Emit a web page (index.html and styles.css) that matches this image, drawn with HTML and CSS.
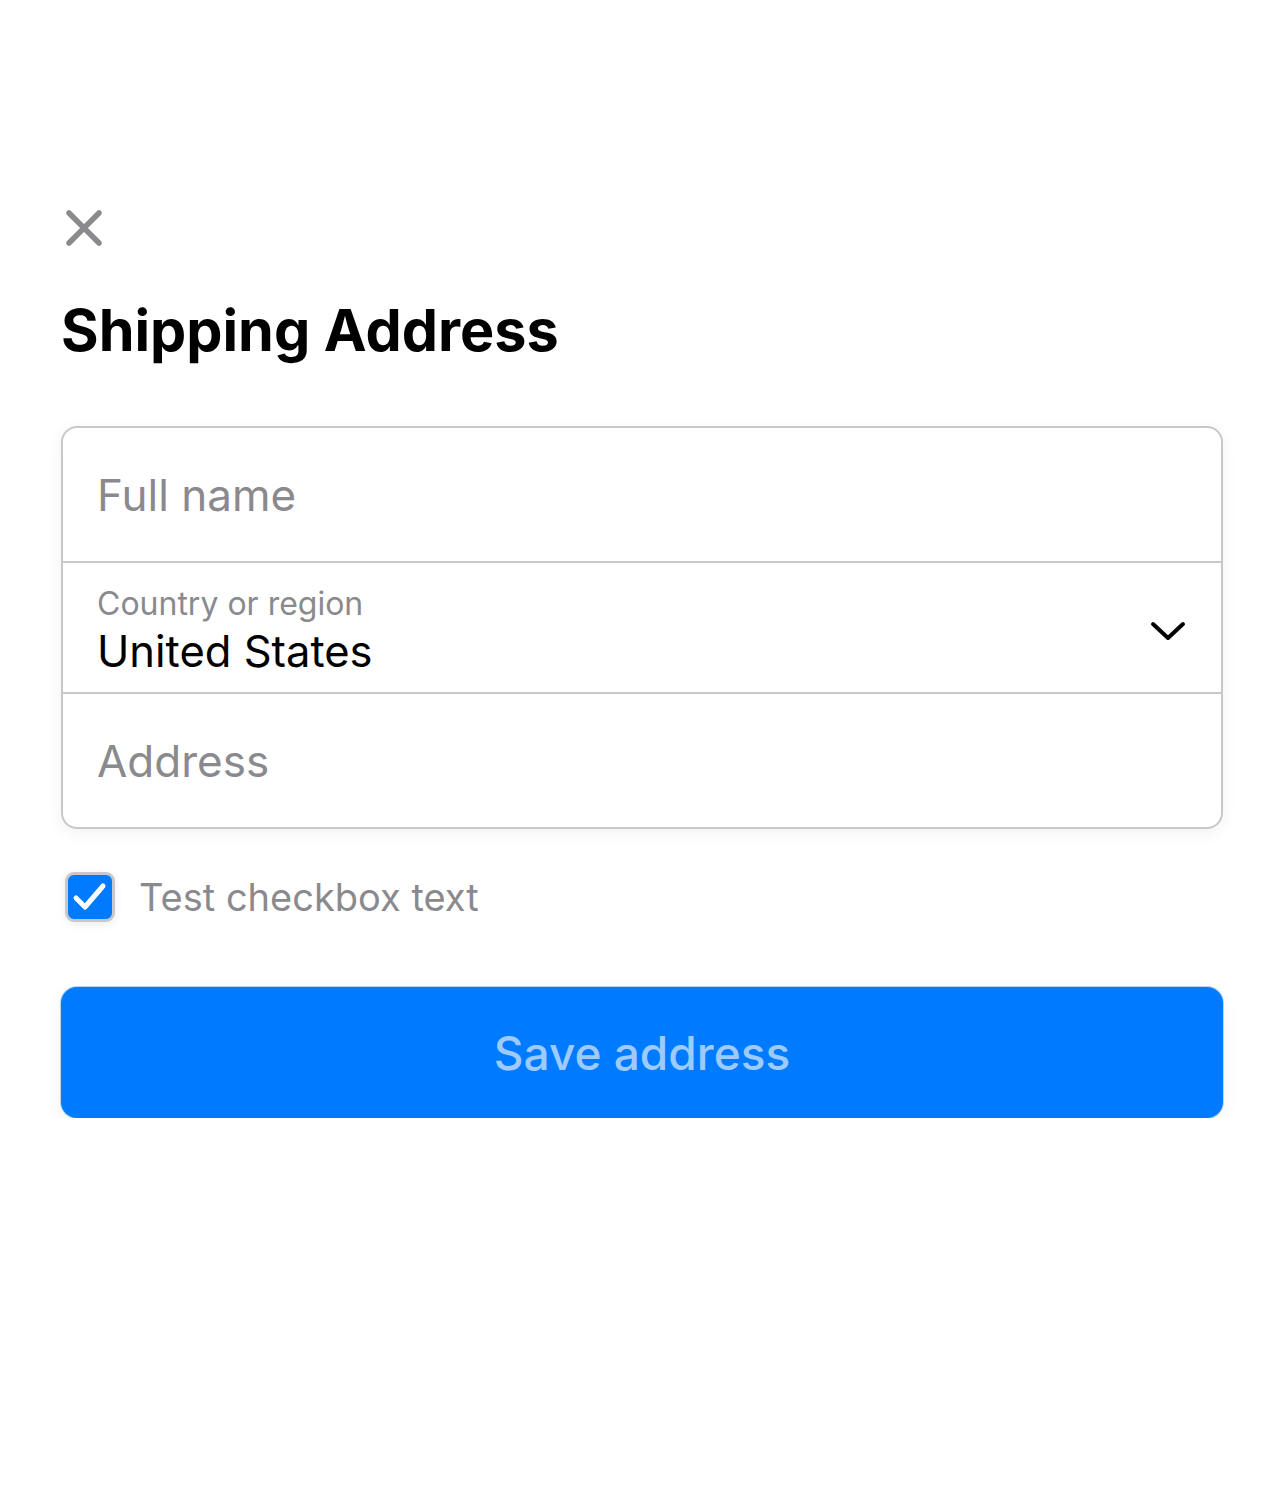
FILE: index.html
```html
<!DOCTYPE html>
<html>
<head>
<meta charset="utf-8">
<link rel="stylesheet" href="styles.css">
</head>
<body>
<div class="page">
  <button class="close" aria-label="Close">
    <svg width="40" height="40" viewBox="0 0 40 40"><path d="M5 5 L35 35 M35 5 L5 35" stroke="#8a8a8e" stroke-width="5.5" stroke-linecap="round" fill="none"/></svg>
  </button>
  <h1 class="title">Shipping Address</h1>
  <div class="card">
    <div class="row row-first">
      <span class="placeholder">Full name</span>
    </div>
    <div class="row row-select">
      <div class="select-text">
        <span class="label">Country or region</span>
        <span class="value">United States</span>
      </div>
      <svg class="chevron" width="36" height="22" viewBox="0 0 36 22"><path d="M3 4 L18 18 L33 4" stroke="#000" stroke-width="4" stroke-linecap="round" stroke-linejoin="round" fill="none"/></svg>
    </div>
    <div class="row row-last">
      <span class="placeholder">Address</span>
    </div>
  </div>
  <div class="check-row">
    <span class="checkbox">
      <svg width="36" height="30" viewBox="0 0 36 30"><path d="M4 16 L13 25 L31 4" stroke="#fff" stroke-width="5" stroke-linecap="round" stroke-linejoin="round" fill="none"/></svg>
    </span>
    <span class="check-label">Test checkbox text</span>
  </div>
  <button class="save">Save address</button>
</div>
</body>
</html>
```

FILE: styles.css
```css
* { box-sizing: border-box; }
html, body { margin: 0; padding: 0; background: #fff; }
body { font-family: Inter, "Noto Sans", sans-serif; }
.page {
  padding: 208px 61px 0 61px;
  display: flex;
  flex-direction: column;
}
.close {
  width: 40px; height: 40px;
  padding: 0; margin: 0 0 0 3px;
  border: 0; background: none;
  display: flex;
}
.title {
  margin: 47px 0 0 0;
  font-size: 57.5px;
  font-weight: 700;
  line-height: 70px;
  color: #000;
  letter-spacing: 0;
}
.card {
  margin-top: 61px;
  border: 2px solid #c7c7cc;
  border-radius: 16px;
  box-shadow: 0 4px 16px rgba(0,0,0,0.06);
  display: flex;
  flex-direction: column;
}
.row {
  padding: 0 34px;
  display: flex;
  align-items: center;
  border-bottom: 2px solid #c7c7cc;
}
.row-first { height: 135px; }
.row-select { height: 131px; justify-content: space-between; padding-top: 6px; }
.row-last { border-bottom: 0; height: 133px; }
.placeholder {
  font-size: 44px;
  color: #8a8a8e;
}
.select-text { display: flex; flex-direction: column; }
.label { font-size: 32px; color: #8a8a8e; line-height: 40px; }
.value { font-size: 43.5px; color: #000; line-height: 54px; }
.chevron { margin-right: 1px; }
.check-row {
  margin-top: 43px;
  display: flex;
  align-items: center;
  gap: 24px;
  padding-left: 4px;
}
.checkbox {
  width: 50px; height: 50px;
  border-radius: 9px;
  background: #007aff;
  border: 3px solid #c7c7cc;
  box-shadow: 0 2px 8px rgba(0,0,0,0.08);
  display: flex;
  align-items: center;
  justify-content: center;
}
.check-label { font-size: 38px; color: #8a8a8e; }
.save {
  margin-top: 65px;
  height: 131px;
  border: 0;
  border-radius: 16px;
  background: #007aff;
  box-shadow: 0 0 0 1px rgba(0,90,200,0.25), 0 6px 18px rgba(0,0,0,0.06);
  color: #9dcbff;
  font-family: Inter, "Noto Sans", sans-serif;
  font-size: 46px;
  font-weight: 500;
}
```
